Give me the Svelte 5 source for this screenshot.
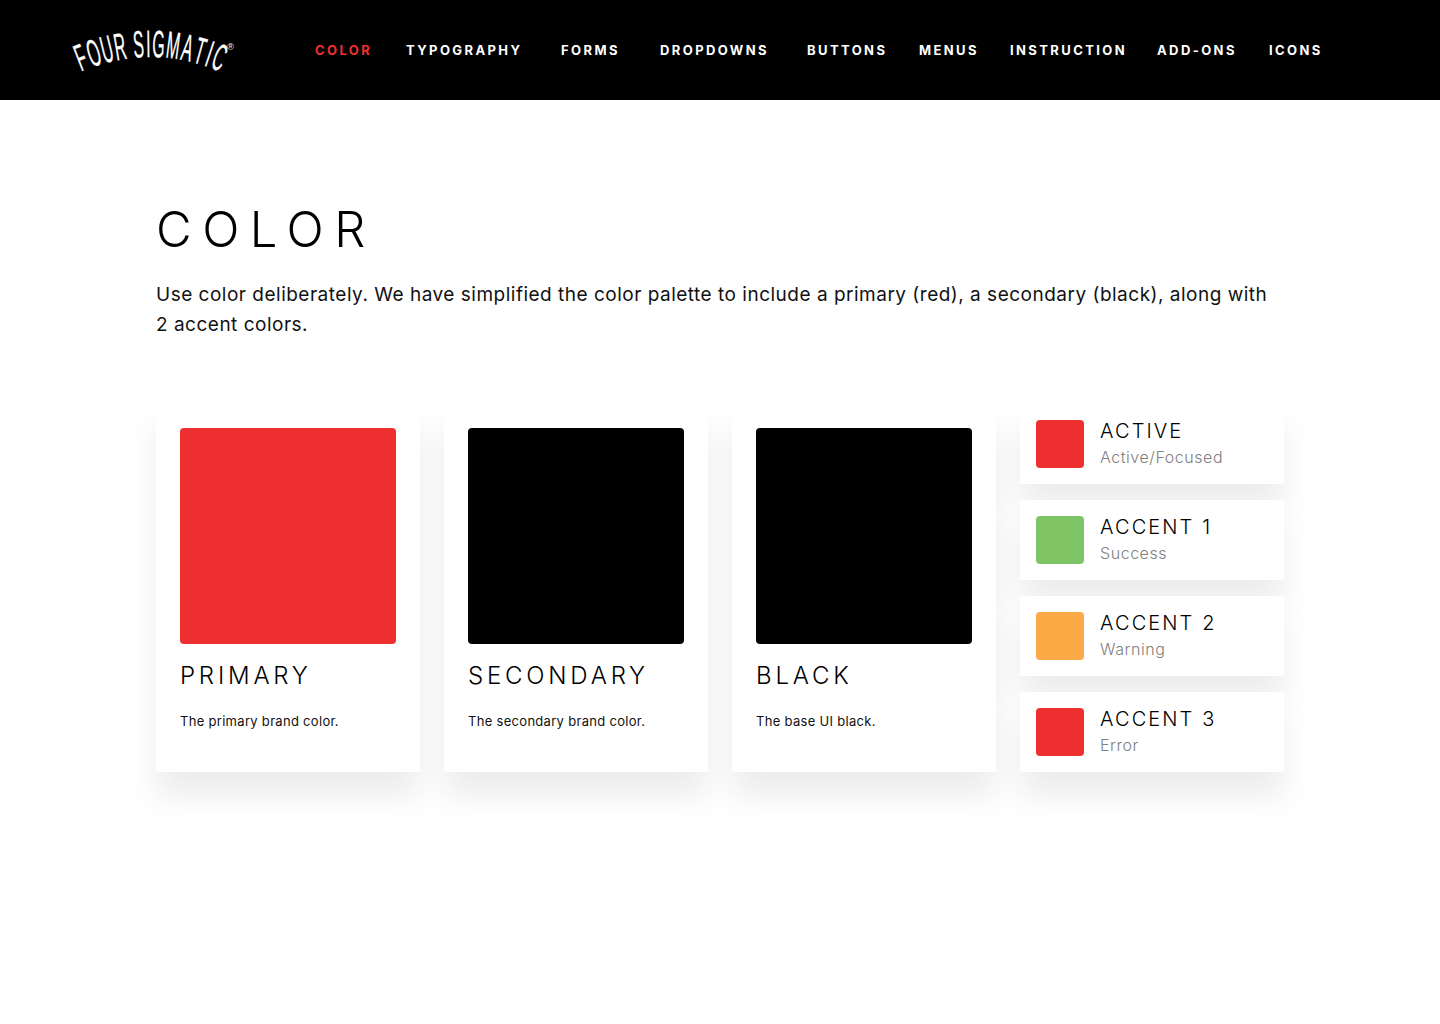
<script>
  const nav = [
    { label: 'COLOR', width: 91, active: true },
    { label: 'TYPOGRAPHY', width: 155 },
    { label: 'FORMS', width: 99 },
    { label: 'DROPDOWNS', width: 147 },
    { label: 'BUTTONS', width: 112 },
    { label: 'MENUS', width: 91 },
    { label: 'INSTRUCTION', width: 147 },
    { label: 'ADD-ONS', width: 112 },
    { label: 'ICONS', width: 60 }
  ];
  const cards = [
    { title: 'PRIMARY', text: 'The primary brand color.', color: '#ef2f2f' },
    { title: 'SECONDARY', text: 'The secondary brand color.', color: '#000' },
    { title: 'BLACK', text: 'The base UI black.', color: '#000' }
  ];
  const accents = [
    { title: 'ACTIVE', text: 'Active/Focused', color: '#ef2f2f' },
    { title: 'ACCENT 1', text: 'Success', color: '#7fc566' },
    { title: 'ACCENT 2', text: 'Warning', color: '#fba945' },
    { title: 'ACCENT 3', text: 'Error', color: '#ef2f2f' }
  ];

  // Wordmark letters set along a shallow arc
  const advances = [
    ['F', 0.72], ['O', 0.8], ['U', 0.78], ['R', 0.76], [' ', 0.34],
    ['S', 0.74], ['I', 0.42], ['G', 0.8], ['M', 0.92], ['A', 0.76],
    ['T', 0.72], ['I', 0.42], ['C', 0.76]
  ];
  const total = advances.reduce((s, a) => s + a[1], 0);
  const p0 = [11, 52], p1 = [81, 22], p2 = [152, 52];
  let run = 0;
  const letters = [];
  for (const [ch, w] of advances) {
    const u = (run + w / 2) / total;
    run += w;
    if (ch === ' ') continue;
    const x = (1 - u) ** 2 * p0[0] + 2 * u * (1 - u) * p1[0] + u ** 2 * p2[0];
    const y = (1 - u) ** 2 * p0[1] + 2 * u * (1 - u) * p1[1] + u ** 2 * p2[1];
    const dx = 2 * (1 - u) * (p1[0] - p0[0]) + 2 * u * (p2[0] - p1[0]);
    const dy = 2 * (1 - u) * (p1[1] - p0[1]) + 2 * u * (p2[1] - p1[1]);
    const angle = (Math.atan2(dy, dx) * 180) / Math.PI;
    letters.push({ ch, t: `translate(${x.toFixed(2)} ${y.toFixed(2)}) rotate(${angle.toFixed(2)}) scale(0.42 1)` });
  }
</script>

<header class="bar">
  <svg class="logo" width="170" height="60" viewBox="0 0 170 60" role="img" aria-label="Four Sigmatic">
    {#each letters as l}
      <text class="logo-text" text-anchor="middle" transform={l.t}>{l.ch}</text>
    {/each}
    <text class="logo-mark" x="161.5" y="29.5" text-anchor="middle">®</text>
  </svg>
  <nav class="menu">
    {#each nav as item}
      <span class="link" class:active={item.active} style="width:{item.width}px">{item.label}</span>
    {/each}
  </nav>
</header>

<main class="page">
  <h1>COLOR</h1>
  <p class="lead">Use color deliberately. We have simplified the color palette to include a primary (red), a secondary (black), along with 2 accent colors.</p>
  <section class="grid">
    {#each cards as c}
      <article class="card">
        <div class="swatch" style="background:{c.color}"></div>
        <h2>{c.title}</h2>
        <p>{c.text}</p>
      </article>
    {/each}
    <div class="stack">
      {#each accents as a}
        <article class="row">
          <div class="chip" style="background:{a.color}"></div>
          <div>
            <h3>{a.title}</h3>
            <p>{a.text}</p>
          </div>
        </article>
      {/each}
    </div>
  </section>
</main>

<style>
  :global(body) {
    margin: 0;
    background: #fff;
    font-family: Inter, "Liberation Sans", sans-serif;
    color: #000;
  }
  .bar {
    height: 100px;
    background: #000;
    display: flex;
    align-items: center;
    box-sizing: border-box;
    padding-left: 69px;
  }
  .logo { flex: none; margin-right: 76px; overflow: visible; }
  .logo-text {
    font-family: "Liberation Sans", sans-serif;
    font-size: 38px;
    fill: #fff;
    stroke: #fff;
    stroke-width: 0.35px;
  }
  .logo-mark {
    font-family: "Liberation Sans", sans-serif;
    font-size: 9px;
    fill: #fff;
  }
  .menu { display: flex; }
  .link {
    flex: none;
    font-size: 13px;
    font-weight: 700;
    letter-spacing: 2.4px;
    color: #fff;
    white-space: nowrap;
  }
  .link.active { color: #ef2f2f; }
  .page { padding: 100px 156px 252px; }
  h1 {
    margin: 0;
    font-size: 49px;
    line-height: 60px;
    font-weight: 300;
    letter-spacing: 10.5px;
  }
  .lead {
    margin: 20px 0 0;
    font-size: 19px;
    line-height: 30px;
    font-weight: 400;
    letter-spacing: 0.5px;
    color: #111;
  }
  .grid {
    display: grid;
    grid-template-columns: repeat(4, 264px);
    gap: 24px;
    margin-top: 64px;
  }
  .card {
    height: 368px;
    box-sizing: border-box;
    padding: 24px;
    background: #fff;
    border-radius: 2px;
    box-shadow: 0 24px 32px rgba(0, 0, 0, 0.08);
  }
  .swatch { width: 216px; height: 216px; border-radius: 4px; }
  .card h2 {
    margin: 16px 0 0;
    font-size: 24px;
    line-height: 32px;
    font-weight: 300;
    letter-spacing: 3.8px;
  }
  .card p {
    margin: 19px 0 0;
    font-size: 13px;
    line-height: 20px;
    letter-spacing: 0.3px;
    color: #111;
  }
  .stack { display: flex; flex-direction: column; gap: 16px; }
  .row {
    height: 80px;
    box-sizing: border-box;
    padding: 16px;
    display: flex;
    gap: 16px;
    background: #fff;
    border-radius: 2px;
    box-shadow: 0 24px 32px rgba(0, 0, 0, 0.08);
  }
  .chip { width: 48px; height: 48px; border-radius: 4px; }
  .row h3 {
    margin: -1px 0 0;
    font-size: 20px;
    line-height: 24px;
    font-weight: 300;
    letter-spacing: 2.1px;
  }
  .row p {
    margin: 2px 0 0;
    font-size: 16px;
    line-height: 24px;
    letter-spacing: 0.55px;
    color: #808080;
    font-weight: 300;
  }
</style>
